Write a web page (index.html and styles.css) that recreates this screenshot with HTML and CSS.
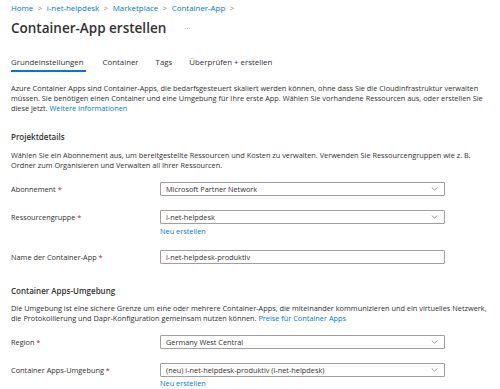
FILE: index.html
```html
<!DOCTYPE html>
<html lang="de">
<head>
    <meta charset="UTF-8">
    <meta name="viewport" content="width=device-width, initial-scale=1.0">
    <title>Container-App erstellen</title>
    <link rel="stylesheet" href="styles.css">
</head>
<body>
    <div class="page">
        <nav class="breadcrumb">
            <a href="#">Home</a><span class="sep">&gt;</span>
            <a href="#">i-net-helpdesk</a><span class="sep">&gt;</span>
            <a href="#">Marketplace</a><span class="sep">&gt;</span>
            <a href="#">Container-App</a><span class="sep">&gt;</span>
        </nav>

        <div class="title-row">
            <h1>Container-App erstellen</h1>
            <span class="more">···</span>
        </div>

        <div class="tabs">
            <span class="tab active">Grundeinstellungen</span>
            <span class="tab">Container</span>
            <span class="tab">Tags</span>
            <span class="tab">Überprüfen + erstellen</span>
        </div>

        <p class="intro">Azure Container Apps sind Container-Apps, die bedarfsgesteuert skaliert werden können, ohne dass Sie die Cloudinfrastruktur verwalten müssen. Sie benötigen einen Container und eine Umgebung für Ihre erste App. Wählen Sie vorhandene Ressourcen aus, oder erstellen Sie diese jetzt. <a href="#">Weitere Informationen</a></p>

        <h2>Projektdetails</h2>
        <p class="desc">Wählen Sie ein Abonnement aus, um bereitgestellte Ressourcen und Kosten zu verwalten. Verwenden Sie Ressourcengruppen wie z. B. Ordner zum Organisieren und Verwalten all Ihrer Ressourcen.</p>

        <div class="field first">
            <label>Abonnement <span class="req">*</span></label>
            <div class="control">
                <div class="select">Microsoft Partner Network<svg class="chev" viewBox="0 0 8 5"><path d="M0.5 0.5 L4 4 L7.5 0.5"/></svg></div>
            </div>
        </div>

        <div class="field">
            <label>Ressourcengruppe <span class="req">*</span></label>
            <div class="control">
                <div class="select">i-net-helpdesk<svg class="chev" viewBox="0 0 8 5"><path d="M0.5 0.5 L4 4 L7.5 0.5"/></svg></div>
                <a href="#" class="new">Neu erstellen</a>
            </div>
        </div>

        <div class="field">
            <label>Name der Container-App <span class="req">*</span></label>
            <div class="control">
                <div class="input">i-net-helpdesk-produktiv</div>
            </div>
        </div>

        <h2 class="section">Container Apps-Umgebung</h2>
        <p class="desc env">Die Umgebung ist eine sichere Grenze um eine oder mehrere Container-Apps, die miteinander kommunizieren und ein virtuelles Netzwerk, die Protokollierung und Dapr-Konfiguration gemeinsam nutzen können. <a href="#">Preise für Container Apps</a></p>

        <div class="field first">
            <label>Region <span class="req">*</span></label>
            <div class="control">
                <div class="select">Germany West Central<svg class="chev" viewBox="0 0 8 5"><path d="M0.5 0.5 L4 4 L7.5 0.5"/></svg></div>
            </div>
        </div>

        <div class="field">
            <label>Container Apps-Umgebung <span class="req">*</span></label>
            <div class="control">
                <div class="select">(neu) i-net-helpdesk-produktiv (i-net-helpdesk)<svg class="chev" viewBox="0 0 8 5"><path d="M0.5 0.5 L4 4 L7.5 0.5"/></svg></div>
                <a href="#" class="new last">Neu erstellen</a>
            </div>
        </div>
    </div>
</body>
</html>
```

FILE: styles.css
```css
body {
    margin: 0;
    background: #fff;
    font-family: "Open Sans", "Noto Sans", sans-serif;
    font-size: 7.35px;
    line-height: 10px;
    color: #323130;
}
a {
    color: #0078d4;
    text-decoration: none;
}
.page {
    padding: 3px 10px 0 11px;
}
.breadcrumb {
    display: flex;
    align-items: center;
    height: 10px;
    font-size: 7.9px;
}
.breadcrumb .sep {
    color: #8a8886;
    margin: 0 4.5px;
}
.title-row {
    display: flex;
    align-items: center;
    height: 16px;
    margin-top: 7px;
}
h1 {
    font-size: 13.5px;
    font-weight: 600;
    line-height: 16px;
    margin: 0;
}
.more {
    color: #8a8886;
    margin-left: 18px;
    font-size: 8px;
}
.tabs {
    display: flex;
    gap: 17px;
    margin-top: 21px;
    font-size: 7.85px;
}
.tab {
    height: 10px;
    padding-bottom: 3px;
    border-bottom: 2px solid transparent;
}
.tab.active {
    padding-right: 2px;
    border-bottom-color: #0078d4;
}
.intro {
    margin: 11px 0 0;
}
h2 {
    font-size: 8px;
    font-weight: 600;
    line-height: 10px;
    margin: 19px 0 0;
}
.desc {
    margin: 8px 0 0;
}
.desc.env {
    margin-top: 7px;
}
.field {
    display: grid;
    grid-template-columns: 149px 285px;
    margin-top: 14px;
}
.field.first {
    margin-top: 12px;
}
.field label {
    padding-top: 2px;
}
.req {
    color: #a4262c;
}
.select, .input {
    display: flex;
    align-items: center;
    justify-content: space-between;
    height: 12px;
    padding: 0 6px 0 5px;
    border: 1px solid #a19f9d;
    border-radius: 1px;
}
.chev {
    width: 7px;
    height: 4px;
    fill: none;
    stroke: #605e5c;
    stroke-width: 0.8;
}
.new {
    display: block;
    margin-top: 2px;
}
.new.last {
    margin-top: 1px;
}
.section {
    margin-top: 22px;
}
```
